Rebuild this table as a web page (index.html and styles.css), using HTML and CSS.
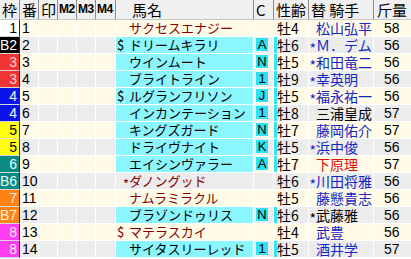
FILE: index.html
```html
<!DOCTYPE html>
<html lang="ja">
<head>
<meta charset="utf-8">
<title>出馬表</title>
<link rel="stylesheet" href="styles.css">
</head>
<body>
<div class="sheet">
  <div class="row head">
    <div class="c">枠</div><div class="c">番</div><div class="c">印</div><div class="c m">M2</div><div class="c m">M3</div><div class="c m">M4</div><div class="c hn">馬名</div><div class="c">C</div><div class="c">性齢</div><div class="c">替&nbsp;騎手</div><div class="c">斤量</div>
  </div>

  <div class="row odd"><div class="c w f1">1</div><div class="c num">1</div><div class="c"></div><div class="c"></div><div class="c"></div><div class="c"></div><div class="c name br"><span class="pfx"></span>サクセスエナジー</div><div class="c cc"></div><div class="c age">牡4</div><div class="c jk"><span class="jp"></span>松山弘平</div><div class="c kg">58</div></div>

  <div class="row even"><div class="c w f2">B2</div><div class="c num">2</div><div class="c"></div><div class="c"></div><div class="c"></div><div class="c"></div><div class="c name cy"><span class="pfx">$</span>ドリームキラリ</div><div class="c cc"><span class="cb">A</span></div><div class="c age mk">牡6</div><div class="c jk"><span class="jp st">*</span>Ｍ．デム</div><div class="c kg">56</div></div>

  <div class="row odd"><div class="c w f3">3</div><div class="c num">3</div><div class="c"></div><div class="c"></div><div class="c"></div><div class="c"></div><div class="c name cy"><span class="pfx"></span>ウインムート</div><div class="c cc"><span class="cb">N</span></div><div class="c age mk">牡5</div><div class="c jk"><span class="jp st">*</span>和田竜二</div><div class="c kg">56</div></div>

  <div class="row even"><div class="c w f3">3</div><div class="c num">4</div><div class="c"></div><div class="c"></div><div class="c"></div><div class="c"></div><div class="c name cy"><span class="pfx"></span>ブライトライン</div><div class="c cc"><span class="cb">1</span></div><div class="c age mk">牡9</div><div class="c jk"><span class="jp st">*</span>幸英明</div><div class="c kg">56</div></div>

  <div class="row odd"><div class="c w f4">4</div><div class="c num">5</div><div class="c"></div><div class="c"></div><div class="c"></div><div class="c"></div><div class="c name cy"><span class="pfx">$</span>ルグランフリソン</div><div class="c cc"><span class="cb">J</span></div><div class="c age mk">牡5</div><div class="c jk"><span class="jp st">*</span>福永祐一</div><div class="c kg">56</div></div>

  <div class="row even"><div class="c w f4">4</div><div class="c num">6</div><div class="c"></div><div class="c"></div><div class="c"></div><div class="c"></div><div class="c name cy"><span class="pfx"></span>インカンテーション</div><div class="c cc"><span class="cb">1</span></div><div class="c age mk">牡8</div><div class="c jk blk"><span class="jp"></span>三浦皇成</div><div class="c kg">57</div></div>

  <div class="row odd"><div class="c w f5">5</div><div class="c num">7</div><div class="c"></div><div class="c"></div><div class="c"></div><div class="c"></div><div class="c name cy"><span class="pfx"></span>キングズガード</div><div class="c cc"><span class="cb">N</span></div><div class="c age mk">牡7</div><div class="c jk"><span class="jp"></span>藤岡佑介</div><div class="c kg">57</div></div>

  <div class="row even"><div class="c w f5">5</div><div class="c num">8</div><div class="c"></div><div class="c"></div><div class="c"></div><div class="c"></div><div class="c name cy"><span class="pfx"></span>ドライヴナイト</div><div class="c cc"><span class="cb">K</span></div><div class="c age mk">牡5</div><div class="c jk"><span class="jp st">*</span>浜中俊</div><div class="c kg">56</div></div>

  <div class="row odd"><div class="c w f6">6</div><div class="c num">9</div><div class="c"></div><div class="c"></div><div class="c"></div><div class="c"></div><div class="c name cy"><span class="pfx"></span>エイシンヴァラー</div><div class="c cc"><span class="cb">A</span></div><div class="c age mk">牡7</div><div class="c jk red"><span class="jp"></span>下原理</div><div class="c kg">57</div></div>

  <div class="row even"><div class="c w f6">B6</div><div class="c num">10</div><div class="c"></div><div class="c"></div><div class="c"></div><div class="c"></div><div class="c name br"><span class="pfx st">*</span>ダノングッド</div><div class="c cc"></div><div class="c age">牡6</div><div class="c jk"><span class="jp st">*</span>川田将雅</div><div class="c kg">56</div></div>

  <div class="row odd"><div class="c w f7">7</div><div class="c num">11</div><div class="c"></div><div class="c"></div><div class="c"></div><div class="c"></div><div class="c name br"><span class="pfx"></span>ナムラミラクル</div><div class="c cc"></div><div class="c age">牡5</div><div class="c jk"><span class="jp"></span>藤懸貴志</div><div class="c kg">56</div></div>

  <div class="row even"><div class="c w f7">B7</div><div class="c num">12</div><div class="c"></div><div class="c"></div><div class="c"></div><div class="c"></div><div class="c name cy"><span class="pfx"></span>ブラゾンドゥリス</div><div class="c cc"><span class="cb">N</span></div><div class="c age mk">牡6</div><div class="c jk blk"><span class="jp st">*</span>武藤雅</div><div class="c kg">56</div></div>

  <div class="row odd"><div class="c w f8">8</div><div class="c num">13</div><div class="c"></div><div class="c"></div><div class="c"></div><div class="c"></div><div class="c name br"><span class="pfx">$</span>マテラスカイ</div><div class="c cc"></div><div class="c age">牡4</div><div class="c jk"><span class="jp"></span>武豊</div><div class="c kg">56</div></div>

  <div class="row even"><div class="c w f8">8</div><div class="c num">14</div><div class="c"></div><div class="c"></div><div class="c"></div><div class="c"></div><div class="c name cy"><span class="pfx"></span>サイタスリーレッド</div><div class="c cc"><span class="cb">1</span></div><div class="c age mk">牡5</div><div class="c jk"><span class="jp"></span>酒井学</div><div class="c kg">57</div></div>
</div>
</body>
</html>
```

FILE: styles.css
```css
html, body {
  margin: 0;
  padding: 0;
  background: #ffffff;
}
body {
  font-family: "Noto Sans CJK JP", "Liberation Sans", sans-serif;
  color: #000;
  width: 411px;
  height: 259px;
  overflow: hidden;
}
.sheet {
  display: flex;
  flex-direction: column;
  width: 411px;
}
.row {
  display: grid;
  grid-template-columns: 20px 19px 19px 19px 19px 20px 138px 20px 35px 65px 38px;
  height: 17px;
}
.c {
  box-sizing: border-box;
  border-right: 1px solid #ffffff;
  border-bottom: 1px solid #ffffff;
  white-space: nowrap;
  font-size: 14px;
  line-height: 16px;
}
.odd .c { background: #fffbe6; }
.even .c { background: #ececec; }

/* header */
.head { height: 20px; }
.head .c {
  background: #f0f0f0;
  border-right: 1px solid #8c8c8c;
  border-bottom: 1px solid #c8c8c8;
  font-size: 15px;
  line-height: 19px;
  padding-left: 2px;
}
.head .c:last-child { border-right: 0; padding-left: 3px; }
.head .m {
  font-family: "Liberation Sans", sans-serif;
  font-size: 12px;
  font-weight: bold;
  padding-left: 1px;
  letter-spacing: -0.5px;
}
.head .hn { padding-left: 16px; }

/* frame */
.odd .w, .even .w {
  text-align: right;
  padding-right: 2px;
  border-right: 1px solid #2a2a3a;
  border-bottom: 1px solid #d8d8d8;
  font-family: "Liberation Sans", sans-serif;
  font-size: 14px;
}
.odd .f1, .even .f1 { background: #ffffff; color: #000; }
.odd .f2, .even .f2 { background: #000000; color: #fff; }
.odd .f3, .even .f3 { background: #f03434; color: #ffd6d6; }
.odd .f4, .even .f4 { background: #0a14e6; color: #fff; }
.odd .f5, .even .f5 { background: #ffff10; color: #000; }
.odd .f6, .even .f6 { background: #0a8a82; color: #e8fff8; }
.odd .f7, .even .f7 { background: #ff8214; color: #fff0e0; }
.odd .f8, .even .f8 { background: #ff3cf0; color: #fff0ff; }

.num {
  padding-left: 2px;
  font-family: "Liberation Sans", sans-serif;
  font-size: 14px;
}

/* name */
.name { font-size: 13px; padding-left: 1px; }
.pfx { display: inline-block; width: 12px; }
.br { color: #800000; }
.odd .cy, .even .cy { background: #8cf6ff; color: #000; }

.cc { padding-left: 2px; }
.cb {
  display: inline-block;
  width: 12px;
  height: 13px;
  margin-top: 1px;
  vertical-align: top;
  background: #2ee0f0;
  font-family: "Liberation Sans", sans-serif;
  font-size: 13px;
  line-height: 13px;
  text-align: center;
}

.age { padding-left: 3px; }
.odd .mk, .even .mk { box-shadow: inset 3px 0 0 #34e4f0; }

.jk { color: #1426c4; }
.jp { display: inline-block; width: 7px; }
.st { position: relative; top: 3px; text-align: right; }
.blk { color: #000; }
.red { color: #e01010; }

.kg {
  padding-left: 10px;
  font-family: "Liberation Sans", sans-serif;
  font-size: 14px;
}
```
